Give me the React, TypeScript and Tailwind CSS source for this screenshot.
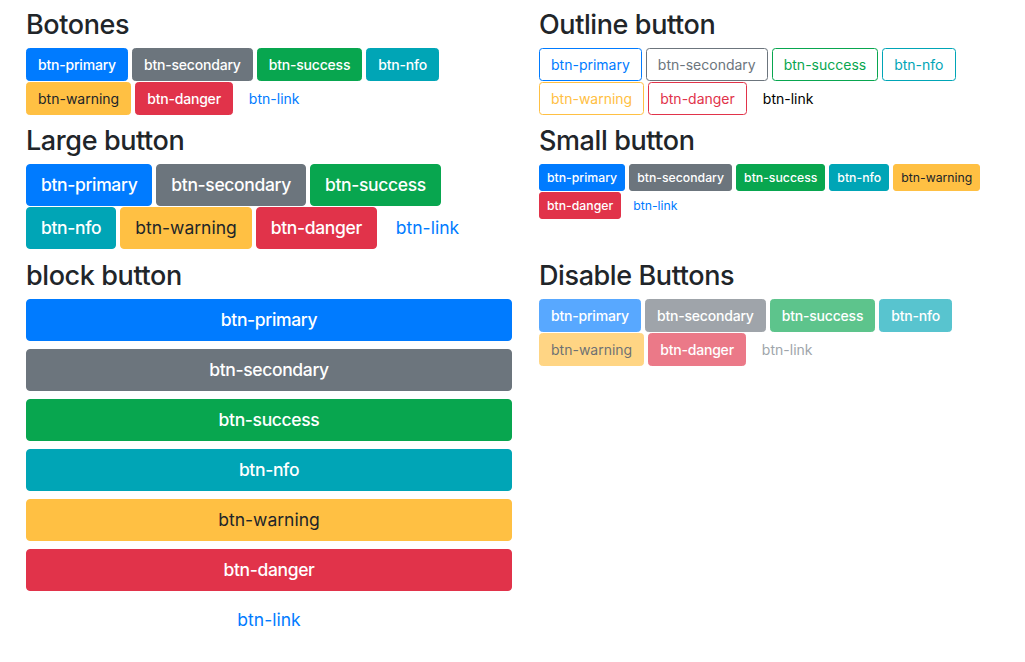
import React from 'react'

type Variant = 'primary' | 'secondary' | 'success' | 'nfo' | 'warning' | 'danger' | 'link'
type Size = 'sm' | 'md' | 'lg'

const solid: Record<Variant, string> = {
  primary: 'bg-[#007bff] border-[#007bff] text-white',
  secondary: 'bg-[#6c757d] border-[#6c757d] text-white',
  success: 'bg-[#08a64f] border-[#08a64f] text-white',
  nfo: 'bg-[#00a5b6] border-[#00a5b6] text-white',
  warning: 'bg-[#ffc043] border-[#ffc043] text-[#212529]',
  danger: 'bg-[#e1334a] border-[#e1334a] text-white',
  link: 'bg-transparent border-transparent text-[#007bff]',
}

const outline: Record<Variant, string> = {
  primary: 'border-[#007bff] text-[#007bff]',
  secondary: 'border-[#6c757d] text-[#6c757d]',
  success: 'border-[#08a64f] text-[#08a64f]',
  nfo: 'border-[#00a5b6] text-[#00a5b6]',
  warning: 'border-[#ffc043] text-[#ffc043]',
  danger: 'border-[#e1334a] text-[#e1334a]',
  link: 'border-transparent text-black',
}

const sizes: Record<Size, string> = {
  sm: 'px-[7px] py-[3px] text-[12.25px] leading-[19px] rounded-[3px]',
  md: 'px-[11px] py-[5px] text-[14px] leading-[21px] rounded-[3.5px]',
  lg: 'px-[14px] py-[7px] text-[17.5px] leading-[26px] rounded-[4px]',
}

// texto blanco se ve más grueso: medium con tracking para compensar el ancho
const whiteText: Record<Size, string> = {
  sm: 'font-medium',
  md: 'font-medium tracking-[-0.2px]',
  lg: 'font-medium tracking-[-0.35px]',
}

const variants: Variant[] = ['primary', 'secondary', 'success', 'nfo', 'warning', 'danger', 'link']

function Btn({
  variant,
  size = 'md',
  kind = 'solid',
  disabled = false,
  block = false,
}: {
  variant: Variant
  size?: Size
  kind?: 'solid' | 'outline'
  disabled?: boolean
  block?: boolean
}) {
  let color = kind === 'solid' ? solid[variant] : outline[variant]
  // el link deshabilitado pasa a gris
  if (disabled && variant === 'link') color = 'bg-transparent border-transparent text-[#6c757d]'
  const isWhite = kind === 'solid' && variant !== 'warning' && variant !== 'link'
  return (
    <button
      className={`border border-solid whitespace-nowrap ${sizes[size]} ${color} ${isWhite ? whiteText[size] : 'font-normal'} ${disabled ? 'opacity-[0.65]' : ''} ${block ? 'w-full text-center' : ''}`}
    >
      btn-{variant}
    </button>
  )
}

function Section({ title, children, className = '' }: { title: string; children: React.ReactNode; className?: string }) {
  return (
    <section className={className}>
      <h2 className="pt-[8px] pb-[6px] text-[27px] leading-[34px] tracking-[-0.4px] font-medium text-[#212529]">{title}</h2>
      {children}
    </section>
  )
}

function Row({ children }: { children: React.ReactNode }) {
  return <div className="flex flex-wrap gap-x-[4px] gap-y-px">{children}</div>
}

export default function App() {
  return (
    <div className="min-h-screen bg-white font-['Inter','Liberation_Sans',sans-serif]">
      <div className="grid grid-cols-[486px_460px] gap-x-[27px] pl-[26px]">
        {/* fila 1 */}
        <Section title="Botones">
          <Row>
            {variants.map((v) => (
              <Btn key={v} variant={v} />
            ))}
          </Row>
        </Section>
        <Section title="Outline button">
          <Row>
            {variants.map((v) => (
              <Btn key={v} variant={v} kind="outline" />
            ))}
          </Row>
        </Section>

        {/* fila 2 */}
        <Section title="Large button" className="pt-px">
          <Row>
            {variants.map((v) => (
              <Btn key={v} variant={v} size="lg" />
            ))}
          </Row>
        </Section>
        <Section title="Small button" className="pt-px">
          <Row>
            {variants.map((v) => (
              <Btn key={v} variant={v} size="sm" />
            ))}
          </Row>
        </Section>

        {/* fila 3 */}
        <Section title="block button" className="pt-[2px]">
          <div className="flex flex-col gap-[8px]">
            {variants.map((v) => (
              <Btn key={v} variant={v} size="lg" block />
            ))}
          </div>
        </Section>
        <Section title="Disable Buttons" className="pt-[2px]">
          <Row>
            {variants.map((v) => (
              <Btn key={v} variant={v} disabled />
            ))}
          </Row>
        </Section>
      </div>
    </div>
  )
}
